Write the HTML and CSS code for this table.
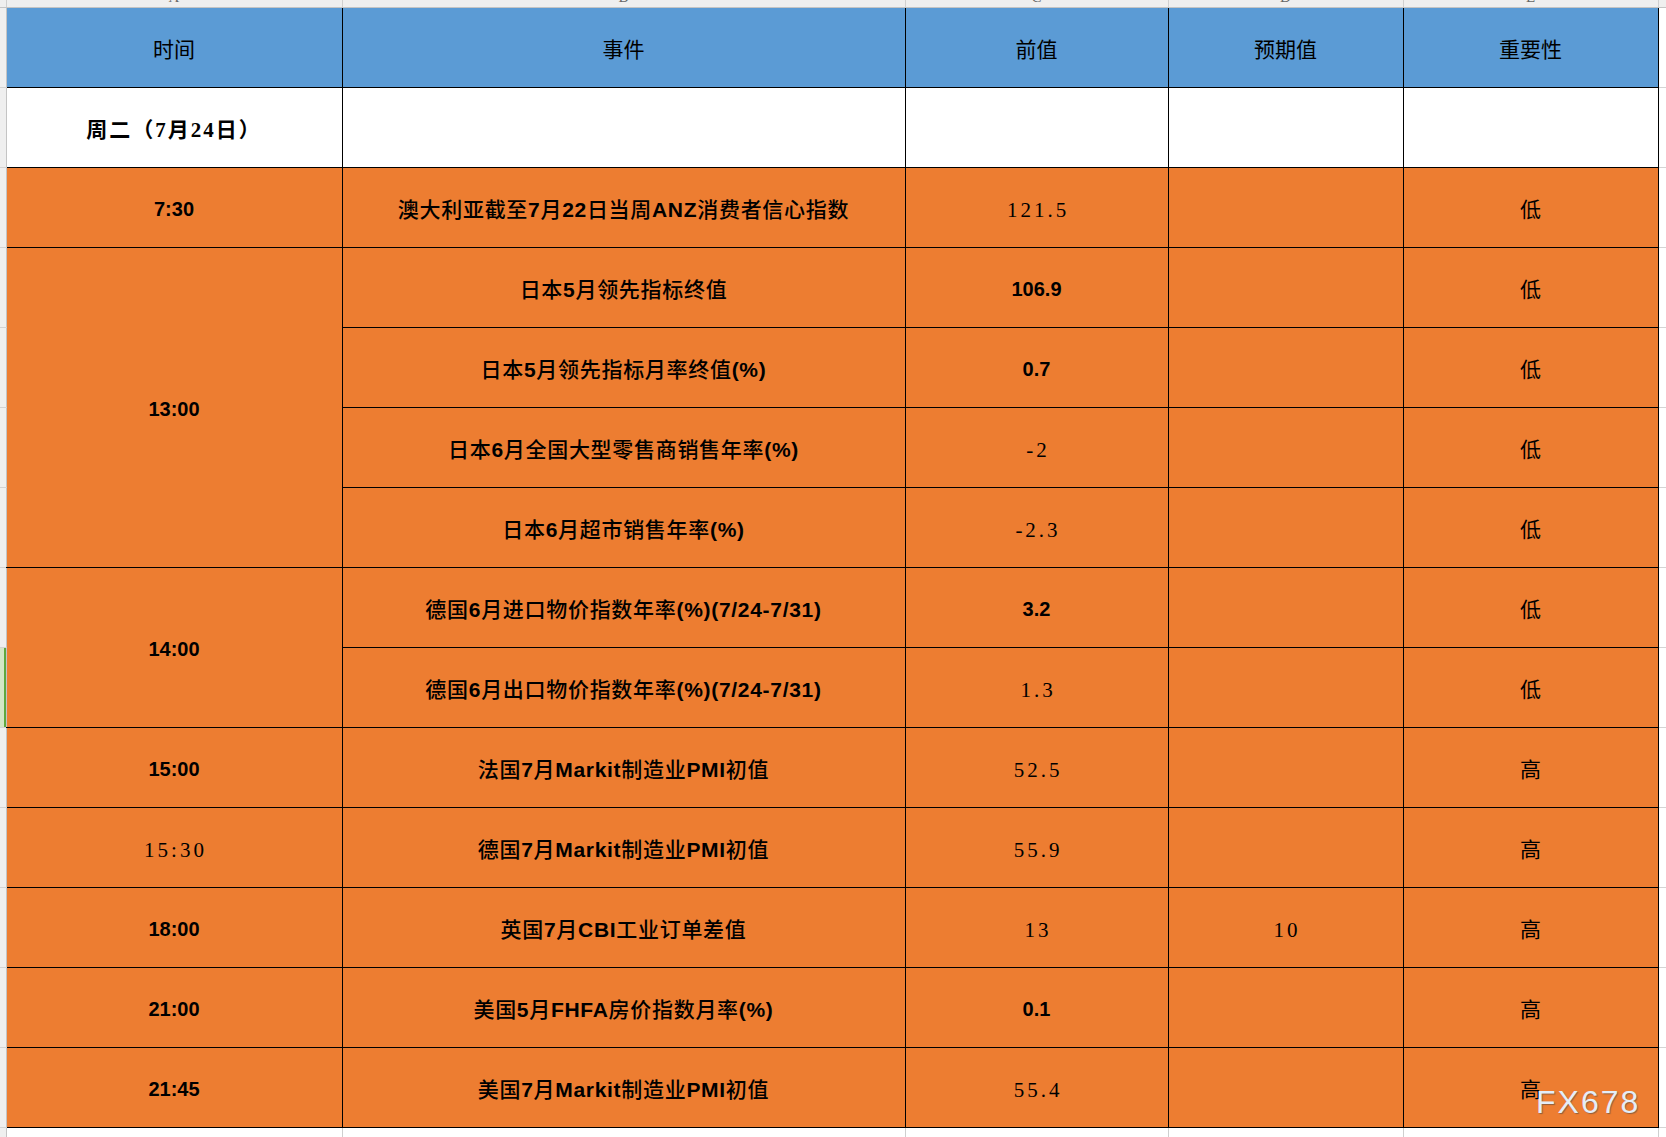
FILE: index.html
```html
<!DOCTYPE html>
<html lang="zh-CN">
<head>
<meta charset="utf-8">
<title>财经日历</title>
<link rel="stylesheet" href="styles.css">
</head>
<body>
<table class="sheet">
  <colgroup>
    <col class="c-rh"><col class="c-a"><col class="c-b"><col class="c-c"><col class="c-d"><col class="c-e"><col class="c-pad">
  </colgroup>
  <tr class="letters">
    <td class="lc"><div class="lt"></div></td>
    <td class="lc"><div class="lt"><span>A</span></div></td>
    <td class="lc"><div class="lt"><span>B</span></div></td>
    <td class="lc"><div class="lt"><span>C</span></div></td>
    <td class="lc"><div class="lt"><span>D</span></div></td>
    <td class="lc"><div class="lt"><span>E</span></div></td>
    <td class="lc"><div class="lt"></div></td>
  </tr>
  <tr class="r head">
    <td class="rh"></td>
    <td class="h a">时间</td>
    <td class="h">事件</td>
    <td class="h">前值</td>
    <td class="h">预期值</td>
    <td class="h">重要性</td>
    <td class="pad"></td>
  </tr>
  <tr class="r day">
    <td class="rh"></td>
    <td class="date a">周二（7月24日）</td>
    <td class="w"></td>
    <td class="w"></td>
    <td class="w"></td>
    <td class="w"></td>
    <td class="pad"></td>
  </tr>
  <tr class="r">
    <td class="rh"></td>
    <td class="o t a">7:30</td>
    <td class="o ev">澳大利亚截至<b>7</b>月<b>22</b>日当周<b>ANZ</b>消费者信心指数</td>
    <td class="o ss">121.5</td>
    <td class="o"></td>
    <td class="o lv">低</td>
    <td class="pad"></td>
  </tr>
  <tr class="r">
    <td class="rh"></td>
    <td class="o t a" rowspan="4">13:00</td>
    <td class="o ev">日本<b>5</b>月领先指标终值</td>
    <td class="o t">106.9</td>
    <td class="o"></td>
    <td class="o lv">低</td>
    <td class="pad"></td>
  </tr>
  <tr class="r">
    <td class="rh"></td>
    <td class="o ev">日本<b>5</b>月领先指标月率终值<b>(%)</b></td>
    <td class="o t">0.7</td>
    <td class="o"></td>
    <td class="o lv">低</td>
    <td class="pad"></td>
  </tr>
  <tr class="r">
    <td class="rh"></td>
    <td class="o ev">日本<b>6</b>月全国大型零售商销售年率<b>(%)</b></td>
    <td class="o ss">-2</td>
    <td class="o"></td>
    <td class="o lv">低</td>
    <td class="pad"></td>
  </tr>
  <tr class="r">
    <td class="rh"></td>
    <td class="o ev">日本<b>6</b>月超市销售年率<b>(%)</b></td>
    <td class="o ss">-2.3</td>
    <td class="o"></td>
    <td class="o lv">低</td>
    <td class="pad"></td>
  </tr>
  <tr class="r">
    <td class="rh"></td>
    <td class="o t a" rowspan="2">14:00</td>
    <td class="o ev">德国<b>6</b>月进口物价指数年率<b>(%)(7/24-7/31)</b></td>
    <td class="o t">3.2</td>
    <td class="o"></td>
    <td class="o lv">低</td>
    <td class="pad"></td>
  </tr>
  <tr class="r">
    <td class="rh sel"></td>
    <td class="o ev">德国<b>6</b>月出口物价指数年率<b>(%)(7/24-7/31)</b></td>
    <td class="o ss">1.3</td>
    <td class="o"></td>
    <td class="o lv">低</td>
    <td class="pad"></td>
  </tr>
  <tr class="r">
    <td class="rh"></td>
    <td class="o t a">15:00</td>
    <td class="o ev">法国<b>7</b>月<b>Markit</b>制造业<b>PMI</b>初值</td>
    <td class="o ss">52.5</td>
    <td class="o"></td>
    <td class="o lv">高</td>
    <td class="pad"></td>
  </tr>
  <tr class="r">
    <td class="rh"></td>
    <td class="o ss a">15:30</td>
    <td class="o ev">德国<b>7</b>月<b>Markit</b>制造业<b>PMI</b>初值</td>
    <td class="o ss">55.9</td>
    <td class="o"></td>
    <td class="o lv">高</td>
    <td class="pad"></td>
  </tr>
  <tr class="r">
    <td class="rh"></td>
    <td class="o t a">18:00</td>
    <td class="o ev">英国<b>7</b>月<b>CBI</b>工业订单差值</td>
    <td class="o ss">13</td>
    <td class="o ss">10</td>
    <td class="o lv">高</td>
    <td class="pad"></td>
  </tr>
  <tr class="r">
    <td class="rh"></td>
    <td class="o t a">21:00</td>
    <td class="o ev">美国<b>5</b>月<b>FHFA</b>房价指数月率<b>(%)</b></td>
    <td class="o t">0.1</td>
    <td class="o"></td>
    <td class="o lv">高</td>
    <td class="pad"></td>
  </tr>
  <tr class="r">
    <td class="rh"></td>
    <td class="o t a">21:45</td>
    <td class="o ev">美国<b>7</b>月<b>Markit</b>制造业<b>PMI</b>初值</td>
    <td class="o ss">55.4</td>
    <td class="o"></td>
    <td class="o lv">高</td>
    <td class="pad"></td>
  </tr>
  <tr class="blank">
    <td class="rh"></td>
    <td class="bl"></td>
    <td class="bl"></td>
    <td class="bl"></td>
    <td class="bl"></td>
    <td class="bl"></td>
    <td class="pad"></td>
  </tr>
</table>
<div class="watermark">FX678</div>
</body>
</html>
```
FILE: styles.css
```css
html, body {
  margin: 0;
  padding: 0;
  background: #ffffff;
}
body {
  width: 1666px;
  height: 1137px;
  overflow: hidden;
  position: relative;
  font-family: "Liberation Sans", "Noto Sans CJK SC", sans-serif;
  color: #000;
}
.sheet {
  border-collapse: collapse;
  table-layout: fixed;
  width: 1666px;
}
.c-rh { width: 6px; }
.c-a { width: 336px; }
.c-b { width: 563px; }
.c-c { width: 263px; }
.c-d { width: 235px; }
.c-e { width: 255px; }
.c-pad { width: 8px; }

.sheet td {
  padding: 0;
  text-align: center;
  vertical-align: middle;
}

/* column letter strip */
.letters td {
  height: 7px;
  background: #efefef;
  border-right: 1px solid #cfcfcf;
  border-bottom: 1px solid #c4c4c4;
}
.lt {
  height: 7px;
  overflow: hidden;
}
.lt span {
  display: block;
  margin-top: -11px;
  font-family: "Liberation Serif", serif;
  font-size: 15px;
  line-height: 16px;
  color: #666;
}

/* row header strip */
.rh {
  background: #efefef;
  border-right: 1px solid #c4c4c4;
  border-bottom: 1px solid #d2d2d2;
}
.rh.sel {
  background: #d3e7c6;
  box-shadow: inset -2px 0 0 #5fa83e;
}

.r { height: 80px; }
.r td.h, .r td.w, .r td.o, .r td.date {
  border: 1px solid #000;
}
.r td.a {
  border-left: none;
}
.h {
  background: #5b9bd5;
  font-family: "Noto Sans CJK SC", sans-serif;
  font-size: 21px;
  font-weight: 400;
  padding-top: 2px;
}
.w, .date { background: #ffffff; }
.date {
  font-family: "Liberation Serif", "Noto Sans CJK SC", serif;
  font-size: 21px;
  font-weight: 700;
  letter-spacing: 2px;
  padding-top: 2px;
}
.o { background: #ed7d31; }

.sheet td.t {
  font-family: "Liberation Sans", sans-serif;
  font-size: 20px;
  font-weight: 700;
  padding-top: 4px;
}
.ev {
  font-family: "Liberation Sans", "Noto Sans CJK SC", sans-serif;
  font-size: 21px;
  font-weight: 500;
  letter-spacing: 0.7px;
  padding-top: 1px;
}
.ev b { font-weight: 700; }
.sheet td.ss {
  font-family: "Liberation Serif", "Noto Sans CJK SC", serif;
  font-size: 21px;
  letter-spacing: 3px;
  padding-left: 3px;
  padding-top: 5px;
}
.lv {
  font-family: "Noto Sans CJK SC", sans-serif;
  font-size: 21px;
  font-weight: 400;
}

.pad {
  border-top: 1px solid #d4d4d4;
  border-bottom: 1px solid #d4d4d4;
}

.blank td { height: 12px; }
.blank .bl {
  border-right: 1px solid #cfcfcf;
}

.watermark {
  position: absolute;
  left: 1536px;
  top: 1086px;
  font-family: "Liberation Sans", sans-serif;
  font-size: 32px;
  line-height: 1;
  letter-spacing: 2px;
  color: #e4edf7;
  text-shadow: 1px 1px 1px rgba(70, 70, 70, 0.55);
}
```
